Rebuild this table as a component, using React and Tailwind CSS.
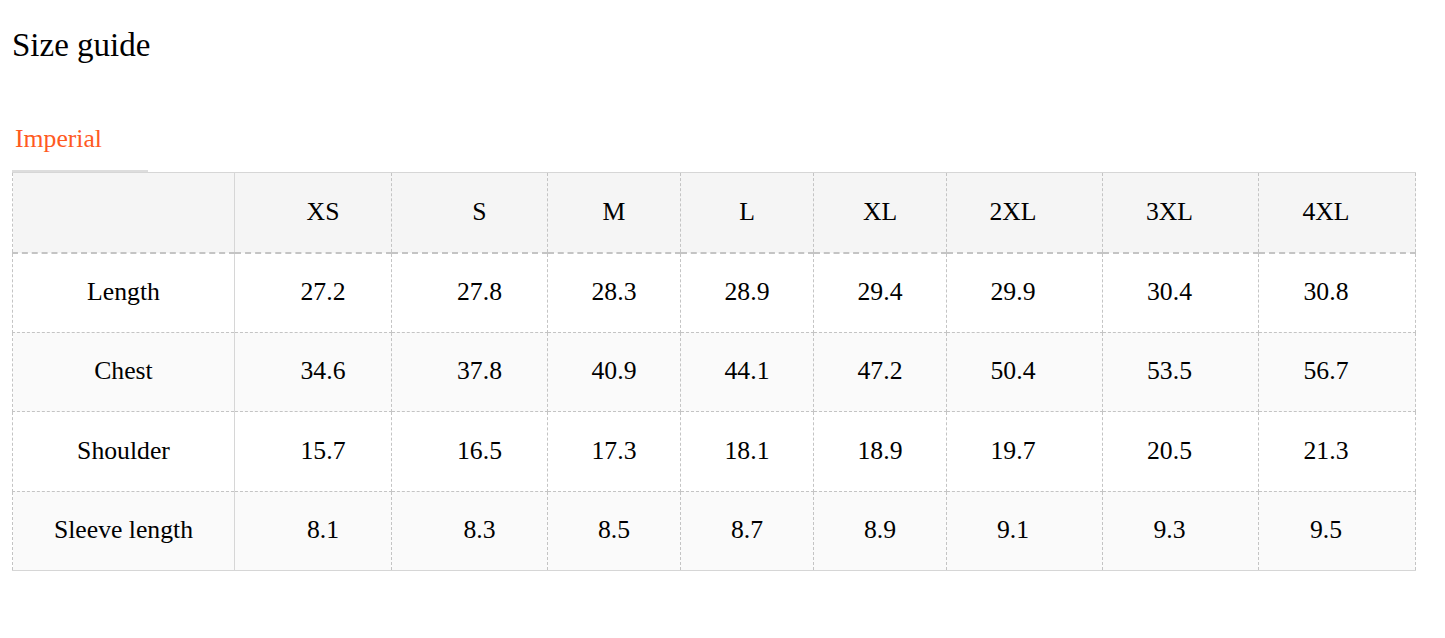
import React from "react";

const sizes = ["XS", "S", "M", "L", "XL", "2XL", "3XL", "4XL"];
const rows = [
  ["Length", ["27.2", "27.8", "28.3", "28.9", "29.4", "29.9", "30.4", "30.8"]],
  ["Chest", ["34.6", "37.8", "40.9", "44.1", "47.2", "50.4", "53.5", "56.7"]],
  ["Shoulder", ["15.7", "16.5", "17.3", "18.1", "18.9", "19.7", "20.5", "21.3"]],
  ["Sleeve length", ["8.1", "8.3", "8.5", "8.7", "8.9", "9.1", "9.3", "9.5"]],
];
const widths = [222, 157, 156, 133, 133, 133, 156, 156, 157];
const pad = [
  "pl-[20px]",
  "pl-[20px]",
  "",
  "",
  "",
  "pr-[23px]",
  "pr-[22px]",
  "pr-[22px]",
];

export default function App() {
  return (
    <div
      className="bg-white text-black min-h-screen px-[12px]"
      style={{ fontFamily: '"Liberation Serif", "Times New Roman", serif' }}
    >
      <h1 className="text-[33px] leading-[38px] pt-[26px] m-0 font-normal">Size guide</h1>
      <div className="mt-[60px] w-[136px] border-b-2 border-[#dddddd] pb-[16px]">
        <span className="text-[25.7px] leading-[30px] text-[#ff5a1f] pl-[3px]">Imperial</span>
      </div>
      <table className="table-fixed border-collapse w-[1404px] border-y border-solid border-[#d6d6d6] text-[25.7px]">
        <colgroup>
          {widths.map((w, i) => (
            <col key={i} style={{ width: w }} />
          ))}
        </colgroup>
        <thead>
          <tr className="bg-[#f5f5f5] h-[80px]">
            <th className="font-normal border border-dashed border-[#c4c4c4] border-b-2 [border-right-style:solid] border-r-[#d6d6d6]"></th>
            {sizes.map((s, i) => (
              <th
                key={s}
                className={`font-normal text-center border border-dashed border-[#c4c4c4] border-b-2 ${pad[i]}`}
              >
                {s}
              </th>
            ))}
          </tr>
        </thead>
        <tbody>
          {rows.map(([label, vals], ri) => (
            <tr key={label} className={`h-[79.5px] ${ri % 2 === 1 ? "bg-[#fafafa]" : "bg-white"}`}>
              <td className="text-center border border-dashed border-[#c4c4c4] [border-right-style:solid] border-r-[#d6d6d6]">
                {label}
              </td>
              {vals.map((v, i) => (
                <td key={i} className={`text-center border border-dashed border-[#c4c4c4] ${pad[i]}`}>
                  {v}
                </td>
              ))}
            </tr>
          ))}
        </tbody>
      </table>
    </div>
  );
}
